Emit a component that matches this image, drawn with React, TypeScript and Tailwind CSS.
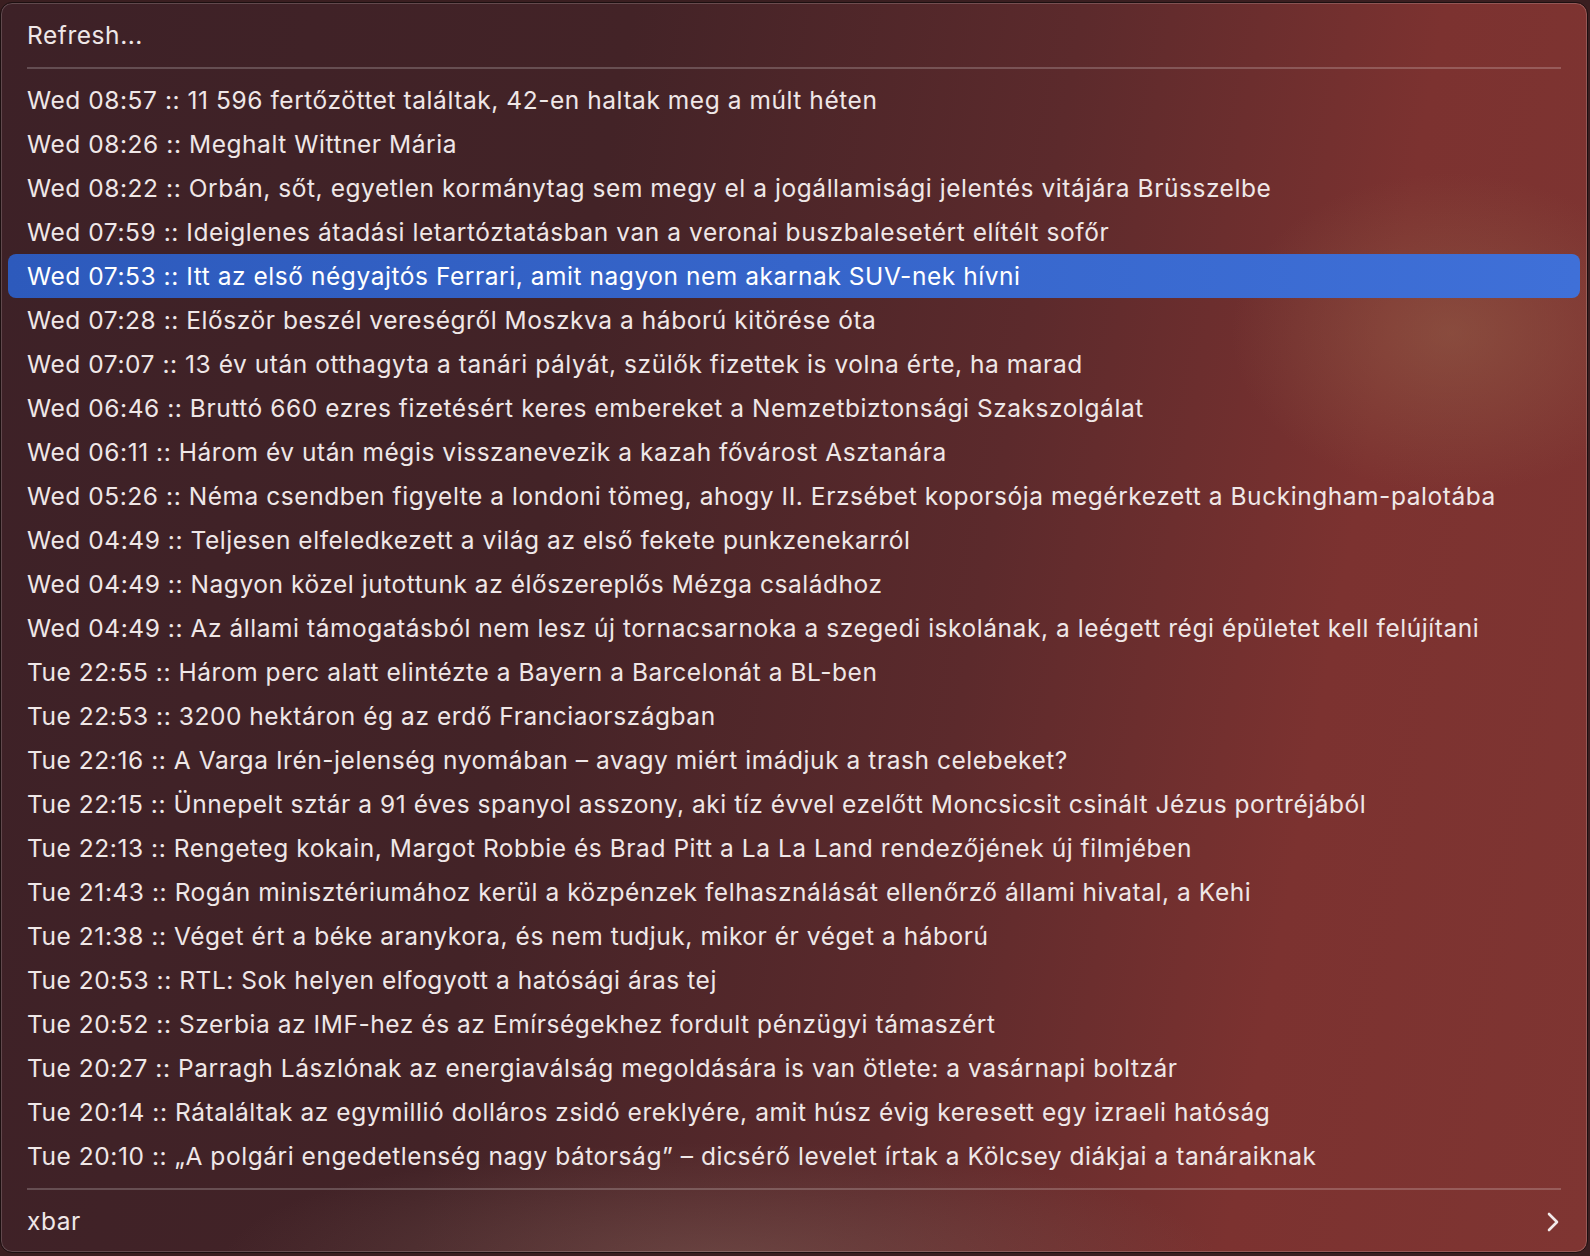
import React from "react";

const items: [string, string][] = [
  ["Wed 08:57", "11 596 fertőzöttet találtak, 42-en haltak meg a múlt héten"],
  ["Wed 08:26", "Meghalt Wittner Mária"],
  ["Wed 08:22", "Orbán, sőt, egyetlen kormánytag sem megy el a jogállamisági jelentés vitájára Brüsszelbe"],
  ["Wed 07:59", "Ideiglenes átadási letartóztatásban van a veronai buszbalesetért elítélt sofőr"],
  ["Wed 07:53", "Itt az első négyajtós Ferrari, amit nagyon nem akarnak SUV-nek hívni"],
  ["Wed 07:28", "Először beszél vereségről Moszkva a háború kitörése óta"],
  ["Wed 07:07", "13 év után otthagyta a tanári pályát, szülők fizettek is volna érte, ha marad"],
  ["Wed 06:46", "Bruttó 660 ezres fizetésért keres embereket a Nemzetbiztonsági Szakszolgálat"],
  ["Wed 06:11", "Három év után mégis visszanevezik a kazah fővárost Asztanára"],
  ["Wed 05:26", "Néma csendben figyelte a londoni tömeg, ahogy II. Erzsébet koporsója megérkezett a Buckingham-palotába"],
  ["Wed 04:49", "Teljesen elfeledkezett a világ az első fekete punkzenekarról"],
  ["Wed 04:49", "Nagyon közel jutottunk az élőszereplős Mézga családhoz"],
  ["Wed 04:49", "Az állami támogatásból nem lesz új tornacsarnoka a szegedi iskolának, a leégett régi épületet kell felújítani"],
  ["Tue 22:55", "Három perc alatt elintézte a Bayern a Barcelonát a BL-ben"],
  ["Tue 22:53", "3200 hektáron ég az erdő Franciaországban"],
  ["Tue 22:16", "A Varga Irén-jelenség nyomában – avagy miért imádjuk a trash celebeket?"],
  ["Tue 22:15", "Ünnepelt sztár a 91 éves spanyol asszony, aki tíz évvel ezelőtt Moncsicsit csinált Jézus portréjából"],
  ["Tue 22:13", "Rengeteg kokain, Margot Robbie és Brad Pitt a La La Land rendezőjének új filmjében"],
  ["Tue 21:43", "Rogán minisztériumához kerül a közpénzek felhasználását ellenőrző állami hivatal, a Kehi"],
  ["Tue 21:38", "Véget ért a béke aranykora, és nem tudjuk, mikor ér véget a háború"],
  ["Tue 20:53", "RTL: Sok helyen elfogyott a hatósági áras tej"],
  ["Tue 20:52", "Szerbia az IMF-hez és az Emírségekhez fordult pénzügyi támaszért"],
  ["Tue 20:27", "Parragh Lászlónak az energiaválság megoldására is van ötlete: a vasárnapi boltzár"],
  ["Tue 20:14", "Rátaláltak az egymillió dolláros zsidó ereklyére, amit húsz évig keresett egy izraeli hatóság"],
  ["Tue 20:10", "„A polgári engedetlenség nagy bátorság” – dicsérő levelet írtak a Kölcsey diákjai a tanáraiknak"],
];

const HIGHLIGHTED = 4;

function Separator() {
  return (
    <div className="h-[21px] flex items-center px-[19px]">
      <div className="h-[2px] w-full bg-[#ffffff33]" />
    </div>
  );
}

export default function App() {
  return (
    <div className="w-[1590px] h-[1256px] bg-[#3a1e20] overflow-hidden font-['Inter','Liberation_Sans',sans-serif]">
      <div className="mt-[2px] w-[1588px] h-[1251px] rounded-[12px] border border-[#1c0f10] shadow-[inset_0_0_0_1px_rgba(255,255,255,0.18)] overflow-hidden bg-[radial-gradient(ellipse_220px_160px_at_1450px_330px,rgba(150,100,75,0.5),transparent),radial-gradient(ellipse_500px_120px_at_720px_1260px,rgba(140,110,100,0.4),transparent),linear-gradient(100deg,#3d2127_0%,#432327_35%,#5c2a2c_60%,#7c3230_80%,#7f3532_100%)] px-[7px] pt-[10px] pb-[9px] text-[#efe7e7] text-[24.5px] tracking-[0.55px]">
        <div className="h-[44px] flex items-center px-[19px] pt-[1px]">Refresh...</div>
        <Separator />
        {items.map(([time, title], i) => (
          <div
            key={i}
            className={`h-[44px] flex items-center px-[19px] pt-[1px] rounded-[8px] whitespace-nowrap ${
              i === HIGHLIGHTED
                ? "bg-[linear-gradient(90deg,#2d5abc,#3f70d8)] text-white"
                : ""
            }`}
          >
            {time} :: {title}
          </div>
        ))}
        <Separator />
        <div className="h-[44px] flex items-center justify-between px-[19px] pt-[1px]">
          <span>xbar</span>
          <svg width="12" height="20" viewBox="0 0 12 20" className="mr-[2px]">
            <path d="M2 2 L10 10 L2 18" fill="none" stroke="#f2eaea" strokeWidth="2.6" strokeLinecap="round" strokeLinejoin="round" />
          </svg>
        </div>
      </div>
    </div>
  );
}
